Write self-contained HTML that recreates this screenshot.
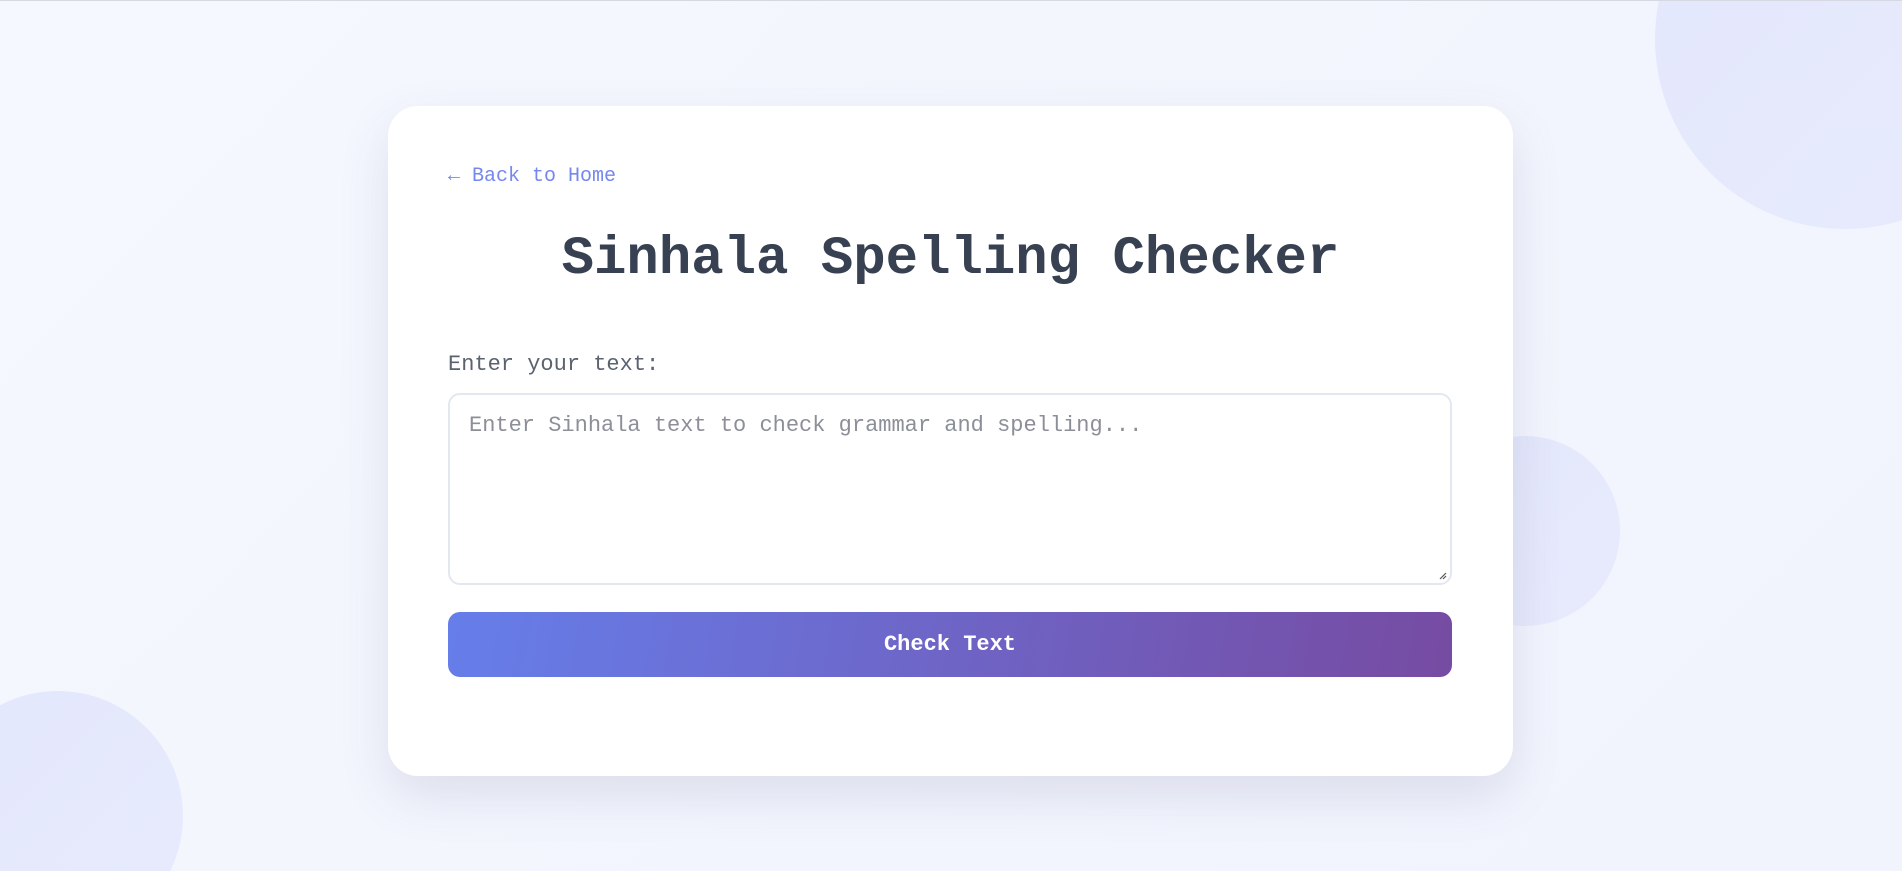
<!DOCTYPE html>
<html><head><meta charset="utf-8"><style>
*{box-sizing:border-box;margin:0;padding:0}
html,body{width:1902px;height:871px;overflow:hidden}
body{background:linear-gradient(135deg,#f6f8ff 0%,#f1f3fd 100%);position:relative;font-family:"Liberation Mono","Courier New",monospace;border-top:1px solid #d6d8e2}
.bg{position:absolute;left:0;top:0;width:1902px;height:870px;overflow:hidden}
.c{position:absolute;border-radius:50%;background:linear-gradient(135deg,#e3e7fc,#e8ebfd)}
.card{position:absolute;left:388px;top:105px;width:1125px;height:670px;background:#fff;border-radius:30px;box-shadow:0 20px 50px rgba(60,70,110,.13);padding:0 60px}
.back{position:absolute;left:60px;top:59px;color:#7588ee;font-size:20px;line-height:24px}
h1{position:absolute;left:0;right:0;top:122px;text-align:center;font-size:54px;line-height:64px;font-weight:bold;color:#374151}
.lbl{position:absolute;left:60px;top:246px;font-size:22px;line-height:26px;color:#5b6270}
.ta{position:absolute;left:60px;top:287px;width:1004px;height:192px;border:2px solid #e2e8f0;border-radius:12px;padding:18px 19px;font-size:22px;line-height:26px;color:#8b8f98}
.grip{position:absolute;right:3px;bottom:3px;width:8px;height:8px}
.btn{position:absolute;left:60px;top:506px;width:1004px;height:65px;border-radius:12px;background:linear-gradient(100deg,#667eea 0%,#764ba2 100%);color:#fff;font-weight:bold;font-size:22px;line-height:65px;text-align:center}
</style></head><body>
<div class="bg">
<div class="c" style="left:1655px;top:-152px;width:380px;height:380px"></div>
<div class="c" style="left:1430px;top:435px;width:190px;height:190px"></div>
<div class="c" style="left:-67px;top:690px;width:250px;height:250px"></div>
</div>
<div class="card">
<div class="back">← Back to Home</div>
<h1>Sinhala Spelling Checker</h1>
<div class="lbl">Enter your text:</div>
<div class="ta">Enter Sinhala text to check grammar and spelling...
<svg class="grip" viewBox="0 0 8 8"><path d="M7 1L1 7M7 4L4 7" stroke="#555" stroke-width="1.2"/></svg></div>
<div class="btn">Check Text</div>
</div>
</body></html>
